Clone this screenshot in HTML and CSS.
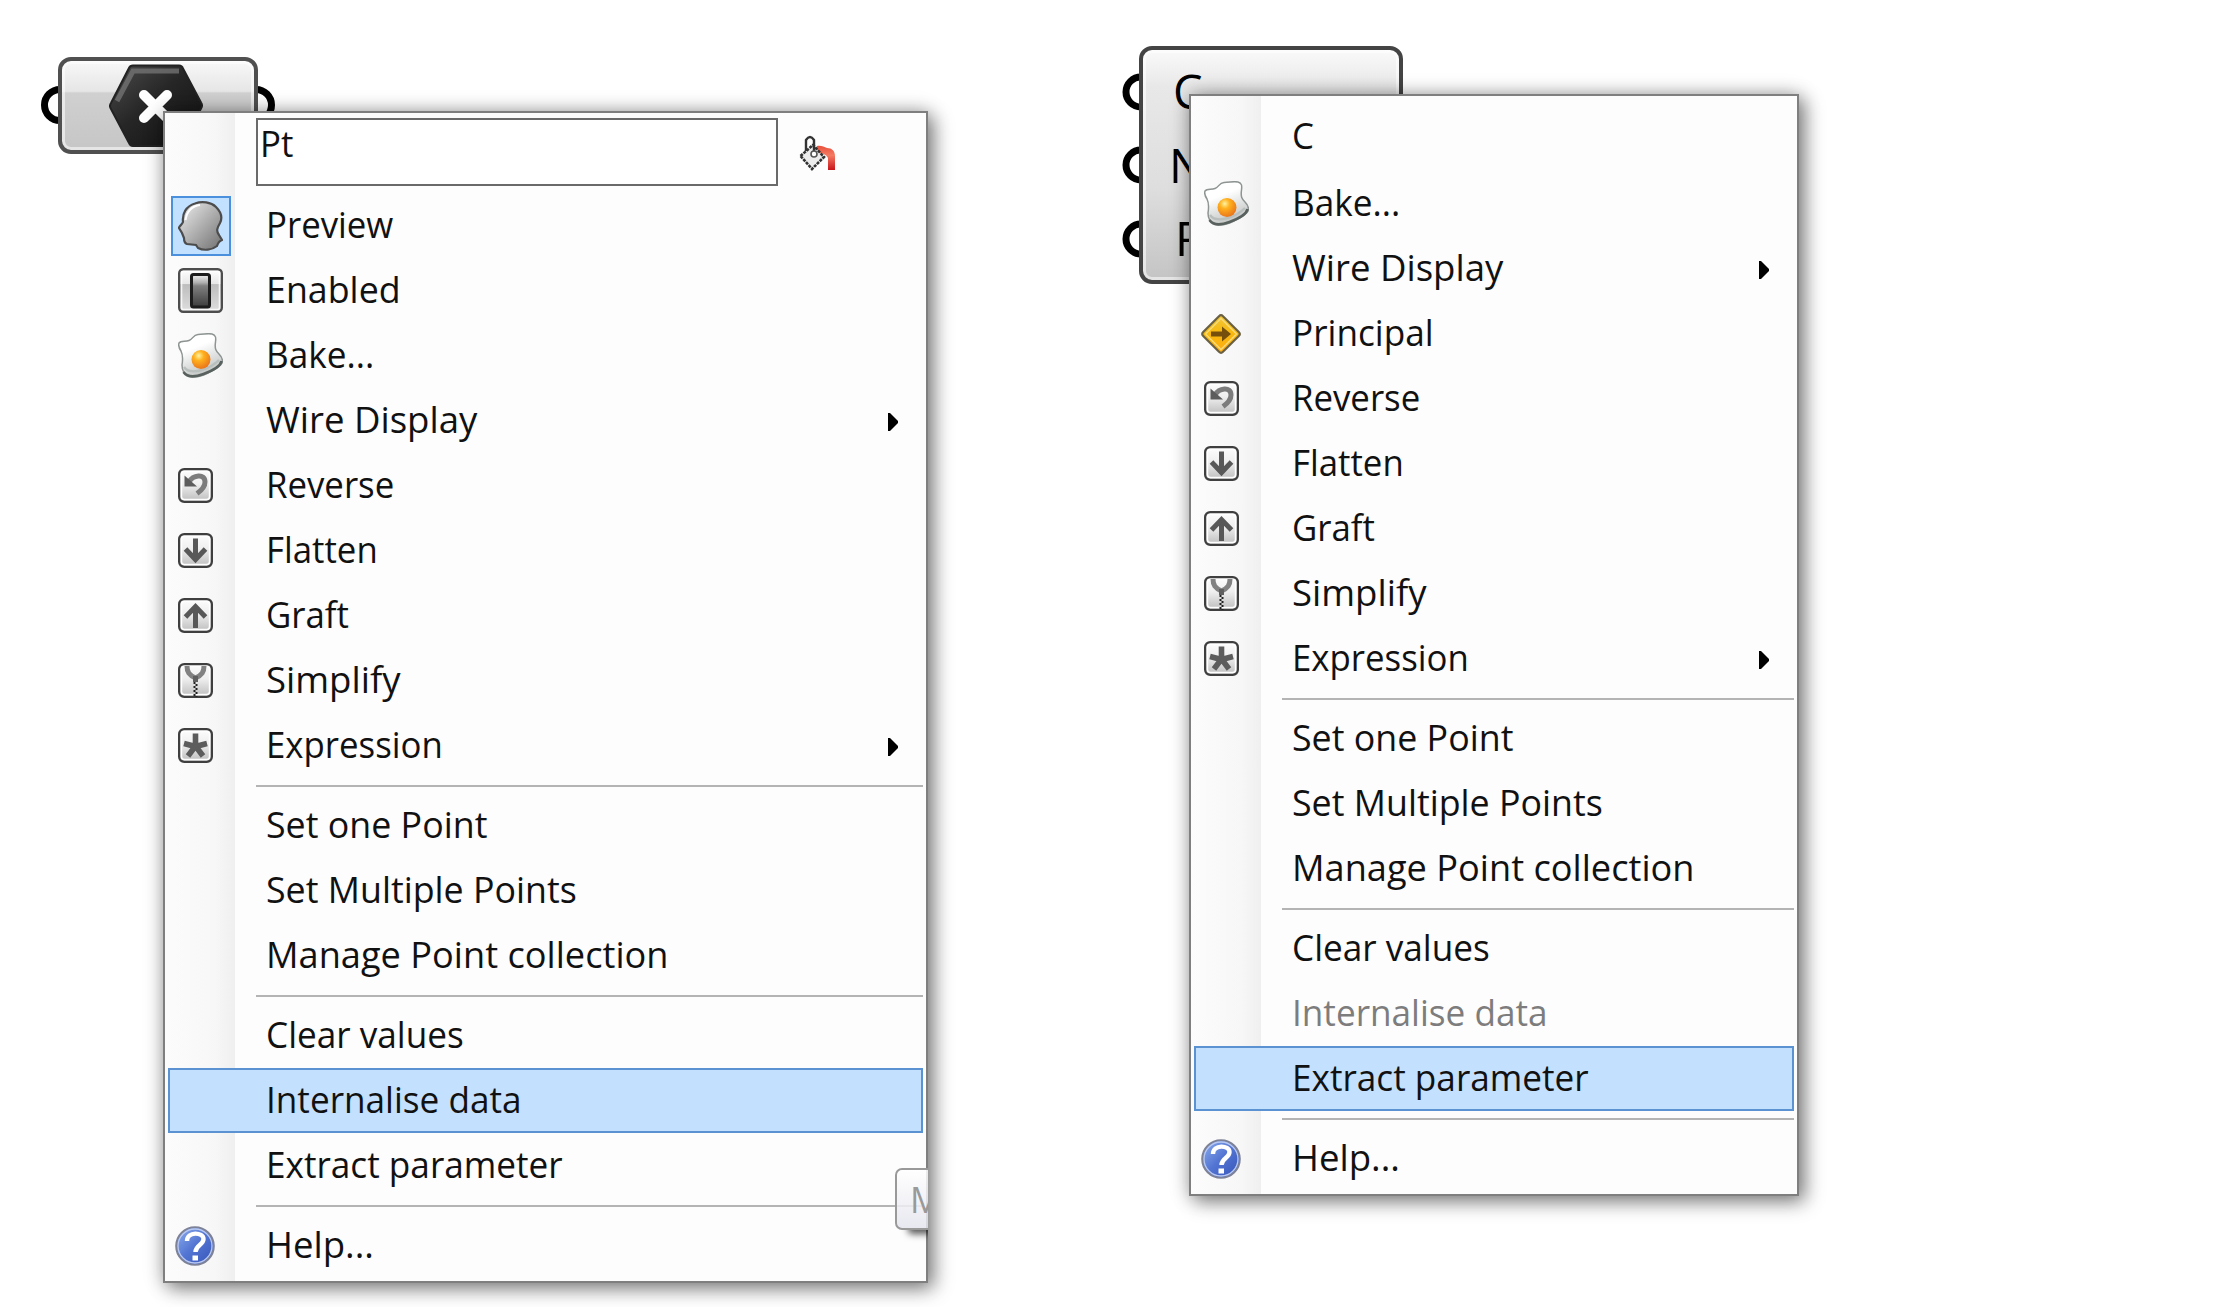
FILE: index.html
```
<!DOCTYPE html>
<html lang="en">
<head>
<meta charset="utf-8">
<title>Parameter menus</title>
<link rel="stylesheet" href="styles.css">
</head>
<body>
<svg class="defs" aria-hidden="true">
  <defs>
    <linearGradient id="gTile" x1="0" y1="0" x2="0" y2="1"><stop offset="0" stop-color="#fdfdfd"/><stop offset=".45" stop-color="#efefef"/><stop offset="1" stop-color="#bcbcbc"/></linearGradient>
    <linearGradient id="gTile2" x1="0" y1="0" x2="0" y2="1"><stop offset="0" stop-color="#ffffff"/><stop offset=".35" stop-color="#e6e6e6"/><stop offset=".36" stop-color="#bdbdbd"/><stop offset="1" stop-color="#dedede"/></linearGradient>
    <linearGradient id="gSwitch" x1="0" y1="0" x2="0" y2="1"><stop offset="0" stop-color="#f2f2f2"/><stop offset=".25" stop-color="#b0b0b0"/><stop offset=".35" stop-color="#808080"/><stop offset="1" stop-color="#3c3c3c"/></linearGradient>
    <linearGradient id="gHead" x1="0" y1="0" x2="1" y2="1"><stop offset="0" stop-color="#f0f0f0"/><stop offset=".4" stop-color="#bdbdbd"/><stop offset="1" stop-color="#707070"/></linearGradient>
    <linearGradient id="gEgg" x1="0" y1="0" x2=".4" y2="1"><stop offset=".4" stop-color="#ffffff"/><stop offset="1" stop-color="#c2c6c5"/></linearGradient>
    <radialGradient id="gYolk" cx=".38" cy=".3" r=".75"><stop offset="0" stop-color="#fff3a0"/><stop offset=".35" stop-color="#ffb11e"/><stop offset="1" stop-color="#e8701a"/></radialGradient>
    <linearGradient id="gSign" x1="0" y1="0" x2="0" y2="1"><stop offset="0" stop-color="#f0c63a"/><stop offset=".5" stop-color="#f8b80c"/><stop offset="1" stop-color="#ffad14"/></linearGradient>
    <linearGradient id="gHelp" x1="0" y1="0" x2="1" y2="1"><stop offset="0" stop-color="#8fb0ee"/><stop offset=".5" stop-color="#5274d2"/><stop offset="1" stop-color="#3654b8"/></linearGradient>
    <linearGradient id="gHex" x1="0" y1="0" x2="1" y2="1"><stop offset="0" stop-color="#4c4c4c"/><stop offset=".45" stop-color="#262626"/><stop offset="1" stop-color="#111"/></linearGradient>
    <linearGradient id="gPaint" x1="0" y1="0" x2="0" y2="1"><stop offset="0" stop-color="#e8503c"/><stop offset=".4" stop-color="#f57a62"/><stop offset="1" stop-color="#c8141a"/></linearGradient>
    <symbol id="head" viewBox="0 0 45 50"><path d="M17 2.500C24 0 33 1 38 6c5 5 7 10 4 16-3 5-4 8-1 12l3 5c-3 1-4 3-5 6-5 4-13 5-19 2l-2-3-9-1c-3-1-3-4-3-6l-2-5-3-5c0-2 3-3 4-6C4 13 8 5 17 2.500z" fill="url(#gHead)" stroke="#4c4c4c" stroke-width="2.200"/><path d="M7.500 19C9 10 14 5 22 4" fill="none" stroke="#fff" stroke-width="2"/></symbol>
    <symbol id="switch" viewBox="0 0 45 45"><rect x="1.200" y="1.200" width="42.600" height="42.600" rx="4" fill="url(#gTile2)" stroke="#4d4d4d" stroke-width="2.400"/><rect x="3.500" y="3.500" width="38" height="38" rx="2" fill="none" stroke="#fff" stroke-width="1.600" opacity=".8"/><rect x="13.500" y="6.500" width="18" height="32.500" rx="2" fill="url(#gSwitch)" stroke="#1c1c1c" stroke-width="3"/></symbol>
    <symbol id="egg" viewBox="0 0 45 45"><path d="M1 10C3 7 7 9 11 7.500 15 6 15 2 20 1.500 26 1.500 29 0 34 1c4 1 4 4 3.500 8C36.500 16 38 18 41 21c3 3 4 6 3 9-3 5-9 7-14 10-6 3-14 5-19 3-6-2-7-6-7-11 1-6 1-10-1-14C1 15 0 13 1 10z" fill="url(#gEgg)" stroke="#8d9492" stroke-width="1.500"/><path d="M5.500 39c4 6 12 5 20 2s17-7 18-13" fill="none" stroke="#59615f" stroke-width="2.600"/><path d="M6 34c4 6 11 5 18 3s14-7 17-10" fill="none" stroke="#b9bfbd" stroke-width="2.400"/><circle cx="23" cy="26.500" r="9.500" fill="url(#gYolk)"/></symbol>
    <symbol id="tile" viewBox="0 0 35 35"><rect x="1.200" y="1.200" width="32.600" height="32.600" rx="5" fill="url(#gTile)" stroke="#3f3f3f" stroke-width="2.400"/><rect x="3.400" y="3.400" width="28.200" height="28.200" rx="3" fill="none" stroke="#fff" stroke-width="1.600"/></symbol>
    <symbol id="reverse" viewBox="0 0 35 35"><use href="#tile"/><path d="M11 14C15 7 27 5 27 14c0 5-3 8-8 11.500" fill="none" stroke="#7c7c7c" stroke-width="5"/><path d="M6.500 7.500V18.500h12.500z" fill="#5c5c5c"/></symbol>
    <symbol id="flatten" viewBox="0 0 35 35"><use href="#tile"/><path d="M17.500 5.500V27M7.500 16l10 10.500L27.500 16" fill="none" stroke="#585858" stroke-width="5"/></symbol>
    <symbol id="graft" viewBox="0 0 35 35"><use href="#tile"/><path d="M17.500 30V8M7.500 19l10-10.500L27.500 19" fill="none" stroke="#585858" stroke-width="5"/></symbol>
    <symbol id="simplify" viewBox="0 0 35 35"><use href="#tile"/><path d="M9 3c0 6 2 9 8.500 12C24 12 26 9 26 3" fill="none" stroke="#828282" stroke-width="5"/><path d="M17.500 13v6" stroke="#606060" stroke-width="5"/><path d="M16.500 19v15" stroke="#222" stroke-width="2" stroke-dasharray="2 2"/><path d="M18.500 21v13" stroke="#222" stroke-width="2" stroke-dasharray="2 2"/></symbol>
    <symbol id="expression" viewBox="0 0 35 35"><use href="#tile"/><path d="M17.500 5.500v12M6 15.500l11.500 3 11.500-3M10 28l7.500-10L25 28" fill="none" stroke="#5c5c5c" stroke-width="5.600"/></symbol>
    <symbol id="principal" viewBox="0 0 40 40"><path d="M18 2.200q2-2 4 0L37.800 18q2 2 0 4L22 37.800q-2 2-4 0L2.200 22q-2-2 0-4z" fill="url(#gSign)" stroke="#6a6044" stroke-width="2.200"/><path d="M20 4.500L35.500 20 20 35.500 4.500 20z" fill="none" stroke="#f7dc7c" stroke-width="1.400"/><path d="M10 17.500h11V12.500l9 7.500-9 7.500v-5H10z" fill="#74500c"/></symbol>
    <symbol id="help" viewBox="0 0 40 40"><circle cx="20" cy="20" r="18.800" fill="url(#gHelp)" stroke="#7d8296" stroke-width="2"/><circle cx="20" cy="20" r="17" fill="none" stroke="#b9c9f2" stroke-width="1.300"/><path d="M12 15c0-10 16.500-9 16.500-2 0 6-8 6-8 13" fill="none" stroke="#fff" stroke-width="4.400"/><rect x="17.500" y="29.500" width="5.500" height="5" fill="#fff"/></symbol>
    <symbol id="bucket" viewBox="0 0 37 37"><path d="M18 11c4-1 7 1 10 2 5 0 8 3 8 8v14h-7V23c-2-4-6-5-11-5z" fill="url(#gPaint)"/><path d="M1.500 21L14 10l11 12-12 12z" fill="#ececec" stroke="#333" stroke-width="2.600" stroke-dasharray="3 1"/><path d="M7 16V5q4-6 8 0v12" fill="none" stroke="#333" stroke-width="2.400"/><circle cx="15" cy="19" r="3" fill="#fff" stroke="#555" stroke-width="1.600"/></symbol>
    <symbol id="arrow" viewBox="0 0 10 18"><path d="M0 0h2l8 8v2l-8 8H0z" fill="#000"/></symbol>
  </defs>
</svg>

<main class="canvas">
  <div class="node node-point">
    <svg class="grip grip-left" viewBox="0 0 20 40"><path d="M20 4.500a15.500 15.500 0 0 0 0 31" /></svg>
    <svg class="grip grip-right" viewBox="0 0 20 40"><path d="M0 4.500a15.500 15.500 0 0 1 0 31" /></svg>
    <div class="capsule">
      <svg class="hex" viewBox="0 0 94 84"><path d="M24 1.500h46q3 0 4 3l18 34q2 3 0 6L74 79q-1 3-4 3H24q-3 0-4-3L2 45q-2-3 0-6L20 4q1-2.500 4-2.500z" fill="url(#gHex)" stroke="#222" stroke-width="2"/><path d="M8 37L24 7h46" fill="none" stroke="#7b7b7b" stroke-width="5" opacity=".7"/><path d="M35 31l23 23M58 31L35 54" stroke="#fff" stroke-width="10" stroke-linecap="round"/></svg>
    </div>
  </div>

  <div class="node node-circle">
    <svg class="grip port-1" viewBox="0 0 20 40"><path d="M20 5a15 15 0 0 0 0 30" /></svg>
    <svg class="grip port-2" viewBox="0 0 20 40"><path d="M20 5a15 15 0 0 0 0 30" /></svg>
    <svg class="grip port-3" viewBox="0 0 20 40"><path d="M20 5a15 15 0 0 0 0 30" /></svg>
    <div class="capsule inputs"><span class="in-c">C</span><span class="in-n">N</span><span class="in-r">R</span></div>
  </div>

  <nav class="menu menu-point">
    <div class="header"><div class="name-box"><span class="t">Pt</span></div><svg class="bucket"><use href="#bucket"/></svg></div>
    <div class="item"><i class="checked"><svg class="i-head"><use href="#head"/></svg></i><span class="t">Preview</span></div>
    <div class="item"><i><svg class="i45"><use href="#switch"/></svg></i><span class="t w3">Enabled</span></div>
    <div class="item"><i><svg class="i45"><use href="#egg"/></svg></i><span class="t w1">Bake...</span></div>
    <div class="item"><i></i><span class="t w5">Wire Display</span><svg class="sub"><use href="#arrow"/></svg></div>
    <div class="item"><i><svg class="i35"><use href="#reverse"/></svg></i><span class="t">Reverse</span></div>
    <div class="item"><i><svg class="i35"><use href="#flatten"/></svg></i><span class="t">Flatten</span></div>
    <div class="item"><i><svg class="i35"><use href="#graft"/></svg></i><span class="t">Graft</span></div>
    <div class="item"><i><svg class="i35"><use href="#simplify"/></svg></i><span class="t w5">Simplify</span></div>
    <div class="item"><i><svg class="i35"><use href="#expression"/></svg></i><span class="t">Expression</span><svg class="sub"><use href="#arrow"/></svg></div>
    <hr>
    <div class="item"><i></i><span class="t w3">Set one Point</span></div>
    <div class="item"><i></i><span class="t w3">Set Multiple Points</span></div>
    <div class="item"><i></i><span class="t w4">Manage Point collection</span></div>
    <hr>
    <div class="item"><i></i><span class="t w1">Clear values</span></div>
    <div class="item active"><i></i><span class="t w1">Internalise data</span></div>
    <div class="item"><i></i><span class="t w1">Extract parameter</span></div>
    <hr>
    <div class="item"><i><svg class="i40"><use href="#help"/></svg></i><span class="t w5">Help...</span></div>
    <div class="tip-clip"><div class="tip"><span class="t">M</span></div></div>
  </nav>

  <nav class="menu menu-circle">
    <div class="header title"><span class="t">C</span></div>
    <div class="item"><i><svg class="i45"><use href="#egg"/></svg></i><span class="t w1">Bake...</span></div>
    <div class="item"><i></i><span class="t w5">Wire Display</span><svg class="sub"><use href="#arrow"/></svg></div>
    <div class="item"><i><svg class="i40"><use href="#principal"/></svg></i><span class="t w1">Principal</span></div>
    <div class="item"><i><svg class="i35"><use href="#reverse"/></svg></i><span class="t">Reverse</span></div>
    <div class="item"><i><svg class="i35"><use href="#flatten"/></svg></i><span class="t">Flatten</span></div>
    <div class="item"><i><svg class="i35"><use href="#graft"/></svg></i><span class="t">Graft</span></div>
    <div class="item"><i><svg class="i35"><use href="#simplify"/></svg></i><span class="t w5">Simplify</span></div>
    <div class="item"><i><svg class="i35"><use href="#expression"/></svg></i><span class="t">Expression</span><svg class="sub"><use href="#arrow"/></svg></div>
    <hr>
    <div class="item"><i></i><span class="t w3">Set one Point</span></div>
    <div class="item"><i></i><span class="t w3">Set Multiple Points</span></div>
    <div class="item"><i></i><span class="t w4">Manage Point collection</span></div>
    <hr>
    <div class="item"><i></i><span class="t w1">Clear values</span></div>
    <div class="item disabled"><i></i><span class="t w1">Internalise data</span></div>
    <div class="item active"><i></i><span class="t w1">Extract parameter</span></div>
    <hr>
    <div class="item"><i><svg class="i40"><use href="#help"/></svg></i><span class="t w5">Help...</span></div>
  </nav>
</main>
</body>
</html>
```
FILE: styles.css
```
* { box-sizing: border-box; }
body { margin: 0; background: #fff; color: #111; font-family: "Open Sans", "Noto Sans", sans-serif; }
svg { display: block; }
.defs { position: absolute; width: 0; height: 0; }
.canvas { position: relative; width: 2218px; height: 1307px; overflow: hidden; }

/* canvas nodes */
.node { position: absolute; }
.node-point { left: 58px; top: 57px; width: 200px; height: 97px; }
.node-circle { left: 1139px; top: 46px; width: 264px; height: 238px; }
.capsule {
  position: relative; width: 100%; height: 100%;
  border: 4px solid #505050; border-radius: 13px;
  background: linear-gradient(#f8f8f8, #e6e6e6 34%, #d0d0d0 36%, #c6c6c6);
  box-shadow: inset 0 0 0 3px rgba(255,255,255,.55);
}
.node-point .capsule { display: flex; justify-content: center; align-items: center; padding-right: 4px; }
.node-circle .capsule { border-color: #444; background: linear-gradient(#fafafa, #e8e8e8 16%, #dedede 60%, #c4c4c4); }
.grip { position: absolute; width: 20px; height: 40px; }
.grip path { fill: #fff; stroke: #000; stroke-width: 7px; }
.grip-left { left: -18px; top: 28px; }
.grip-right { right: -18px; top: 28px; }
.port-1 { left: -18px; top: 26px; }
.port-2 { left: -18px; top: 99px; }
.port-3 { left: -18px; top: 173px; }
.hex { width: 94px; height: 84px; }
.inputs { display: flex; flex-direction: column; padding: 5px 0 0 26px; font-size: 47px; line-height: 73.500px; color: #000; }
.in-c { margin-left: 4px; }
.in-r { margin-left: 6px; }

/* context menus */
.menu {
  position: absolute; border: 2px solid #7f7f7f; padding-bottom: 3px;
  background: linear-gradient(90deg, #fcfcfc, #f7f7f7 50px, #efefef 70px, #fdfdfd 70px);
  box-shadow: 6px 6px 18px rgba(0,0,0,.42), 0 0 18px rgba(0,0,0,.26);
}
.menu-point { left: 163px; top: 111px; width: 765px; height: 1172px; }
.menu-circle { left: 1189px; top: 94px; width: 610px; height: 1102px; }
.header { height: 80px; display: flex; padding-left: 91px; }
.name-box { width: 522px; height: 68px; margin-top: 5px; border: 2px solid #6a6a6a; background: #fff; padding: 0 0 0 2px; line-height: 46px; }
.bucket { width: 37px; height: 37px; margin: 22px 0 0 21px; }
.title { height: 75px; padding: 2px 0 0 101px; align-items: center; }
.item { height: 65px; margin: 0 3px; display: flex; align-items: center; border: 2px solid transparent; }
.item i { width: 60px; height: 60px; display: flex; align-items: center; margin-left: 1px; padding-left: 7px; flex: none; }
.item .t { margin: 0 0 4px 35px; }
.t { font-size: 37px; white-space: nowrap; transform: scaleX(.94); transform-origin: 0 50%; display: inline-block; }

/* label widths */
.w1 { transform: scaleX(.95); }
.w3 { transform: scaleX(.967); }
.w4 { transform: scaleX(.978); }
.w5 { transform: scaleX(.988); }

.checked { border: 2px solid #4a90dc; background: #c2e0ff; }
.item .checked { padding-left: 5px; }
.i-head { width: 45px; height: 50px; }
.i45 { width: 45px; height: 45px; }
.i35 { width: 35px; height: 35px; }
.i40 { width: 40px; height: 40px; margin-left: -3px; }
.sub { width: 10px; height: 18px; margin: 2px 23px 0 auto; }
.active { background: #c4e0ff; border-color: #5a92d2; }
.disabled { color: #7d7d7d; }
hr { height: 15px; margin: 0 3px 0 91px; border: 0; background: linear-gradient(#b4b4b4, #b4b4b4) 0 7px / 100% 2px no-repeat; }

/* partly hidden tooltip at the menu's right edge */
.tip-clip { position: absolute; right: -2px; top: 1050px; width: 40px; height: 80px; overflow: hidden; }
.tip { margin: 5px 0 0 7px; width: 80px; height: 62px; border: 2px solid #999; border-radius: 7px; padding-left: 13px; line-height: 58px; color: #999; background: linear-gradient(rgba(255,255,255,.85), rgba(228,228,238,.85)); box-shadow: 10px 7px 7px -3px rgba(0,0,0,.65); }
```
